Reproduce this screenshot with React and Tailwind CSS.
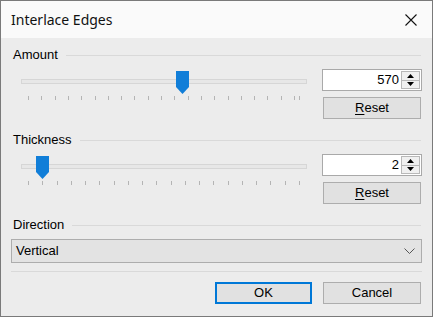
import React from "react";

const amountTicks = [...Array.from({ length: 21 }, (_, k) => 28 + k * 13.3), 299];
const thickTicks = Array.from({ length: 20 }, (_, k) => 28 + k * (271 / 19));

function Slider({ thumbX, ticks }) {
  return (
    <div className="relative w-[297px] h-[50px]">
      <div className="absolute left-[10px] top-[10px] w-[286px] h-[5px] border border-[#d6d6d6] bg-[#e7e7e7]" />
      <svg className="absolute left-0 top-[27px]" width="297" height="4">
        {ticks.map((x, i) => (
          <rect key={i} x={Math.round(x) - 11} y="0" width="1" height="4" fill="#b4b4b4" />
        ))}
      </svg>
      <svg
        className="absolute top-[2px]"
        style={{ left: thumbX - 11 }}
        width="13"
        height="24"
        viewBox="0 0 13 24"
      >
        <polygon points="0,0 13,0 13,16 6.5,23 0,16" fill="#117ed8" />
      </svg>
    </div>
  );
}

function SpinBox({ value }) {
  return (
    <div className="flex items-center w-[100px] h-[22px] border border-[#a9a9a9] bg-white">
      <div className="flex-1 text-right pr-[2px] leading-[20px]">{value}</div>
      <div className="flex flex-col w-[19px] h-[18px] mr-[1px]">
        <div className="flex-1 flex items-center justify-center border border-[#b8b8b8] bg-[#f0f0f0]">
          <svg width="7" height="4" viewBox="0 0 7 4">
            <polygon points="0,4 7,4 3.5,0" fill="#000" />
          </svg>
        </div>
        <div className="flex-1 flex items-center justify-center border border-t-0 border-[#b8b8b8] bg-[#f0f0f0]">
          <svg width="7" height="4" viewBox="0 0 7 4">
            <polygon points="0,0 7,0 3.5,4" fill="#000" />
          </svg>
        </div>
      </div>
    </div>
  );
}

function ResetButton() {
  return (
    <div className="mt-[6px] ml-[1px] w-[98px] h-[22px] border border-[#adadad] bg-[#e1e1e1] flex items-center justify-center leading-[20px]">
      <span>
        <span className="underline underline-offset-[2px]">R</span>eset
      </span>
    </div>
  );
}

function Label({ text }) {
  return (
    <div className="flex items-center gap-2 h-[14px] leading-[14px] pl-[2px] pr-[1px]">
      <span>{text}</span>
      <div className="flex-1 h-px bg-[#d9d9d9]" />
    </div>
  );
}

function SliderRow({ thumbX, ticks, value }) {
  return (
    <div className="mt-[7px] flex justify-between items-start">
      <Slider thumbX={thumbX} ticks={ticks} />
      <div className="flex flex-col w-[100px]">
        <SpinBox value={value} />
        <ResetButton />
      </div>
    </div>
  );
}

export default function App() {
  return (
    <div className="w-[433px] h-[317px] border border-[#7a7a7a] flex flex-col font-['Liberation_Sans',Arial,sans-serif] text-[13px] text-black">
      <div className="h-[37px] bg-[#fafafa] flex items-center justify-between pl-[10px] pr-[15px]">
        <span className="font-['Noto_Sans',sans-serif] text-[14px] text-[#111]">Interlace Edges</span>
        <svg width="12" height="12" viewBox="0 0 12 12">
          <path d="M0.5 0.5 L11.5 11.5 M11.5 0.5 L0.5 11.5" stroke="#111" strokeWidth="1.1" />
        </svg>
      </div>
      <div className="flex-1 bg-[#ececec] pl-[10px] pr-[10px] pt-[10px]">
        <Label text="Amount" />
        <SliderRow thumbX={176} ticks={amountTicks} value="570" />
        <div className="mt-[14px]">
          <Label text="Thickness" />
        </div>
        <SliderRow thumbX={36} ticks={thickTicks} value="2" />
        <div className="mt-[14px]">
          <Label text="Direction" />
        </div>
        <div className="mt-[7px] h-[24px] border border-[#adadad] bg-[#e3e3e3] flex items-center justify-between pl-[4px] pr-[6px]">
          <span>Vertical</span>
          <svg width="11" height="6" viewBox="0 0 11 6">
            <path d="M0.5 0.5 L5.5 5.5 L10.5 0.5" stroke="#555" strokeWidth="1" fill="none" />
          </svg>
        </div>
        <div className="mt-[8px] h-px bg-[#d9d9d9]" />
        <div className="mt-[10px] flex justify-end gap-[11px] pr-[1px]">
          <div className="w-[97px] h-[22px] border-2 border-[#0078d7] bg-[#e1e1e1] flex items-center justify-center">OK</div>
          <div className="w-[98px] h-[22px] border border-[#adadad] bg-[#e1e1e1] flex items-center justify-center">Cancel</div>
        </div>
      </div>
    </div>
  );
}
